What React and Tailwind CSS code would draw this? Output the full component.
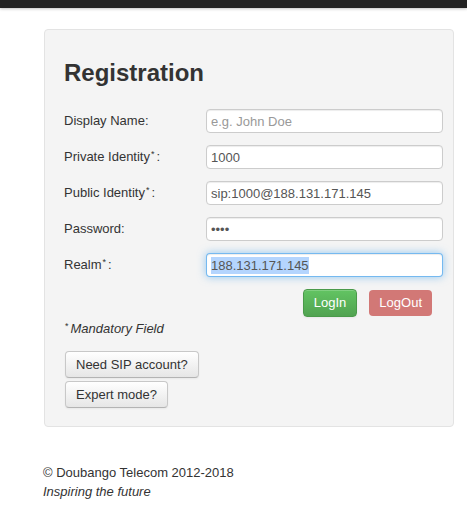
function Field({ label, star, children }) {
  return (
    <div className="flex items-center h-6">
      <label className="w-[142px] shrink-0 text-[13px] text-[#333]">
        {label}
        {star && <sup className="text-[9px] relative -top-[4px] ml-[1px]">*</sup>}
        {star ? <span className="ml-[2px]">:</span> : ":"}
      </label>
      {children}
    </div>
  );
}

const inputCls =
  "w-[237px] h-6 px-[4px] text-[13px] text-[#555] bg-white border border-[#ccc] rounded-[4px] shadow-[inset_0_1px_1px_rgba(0,0,0,0.075)] outline-none placeholder:text-[#999]";

const btnCls =
  "h-[27px] px-[10px] text-[13px] text-[#333] rounded-[4px] bg-gradient-to-b from-white to-[#e6e6e6] border border-[#c8c8c8] border-b-[#b3b3b3] shadow-[inset_0_1px_0_rgba(255,255,255,0.2),0_1px_2px_rgba(0,0,0,0.05)]";

export default function App() {
  return (
    <div
      className="min-h-[530px] bg-white text-[#333]"
      style={{ fontFamily: '"Liberation Sans", Arial, sans-serif' }}
    >
      {/* TOP BAR */}
      <div className="h-2 bg-[#222] shadow-[0_1px_3px_rgba(0,0,0,0.25)]" />

      {/* PANEL */}
      <div className="ml-[44px] mt-[21px] w-[410px] h-[398px] bg-[#f4f4f4] border border-[#e3e3e3] rounded-[4px] pl-[19px] pt-[23px]">
        <h2 className="text-[24px] font-bold leading-[40px] text-[#333]">Registration</h2>

        <div className="mt-[16px] flex flex-col gap-3">
          <Field label="Display Name">
            <input className={inputCls} placeholder="e.g. John Doe" readOnly />
          </Field>
          <Field label="Private Identity" star>
            <input className={inputCls} defaultValue="1000" readOnly />
          </Field>
          <Field label="Public Identity" star>
            <input className={inputCls} defaultValue="sip:1000@188.131.171.145" readOnly />
          </Field>
          <Field label="Password">
            <input className={inputCls} type="password" defaultValue="1000" readOnly />
          </Field>
          <Field label="Realm" star>
            <div className="w-[237px] h-6 px-[4px] flex items-center text-[13px] text-[#555] bg-white border border-[rgba(82,168,236,0.8)] rounded-[4px] shadow-[inset_0_1px_1px_rgba(0,0,0,0.075),0_0_8px_rgba(82,168,236,0.6)]">
              <span className="bg-[#b4d5fe] leading-[17px]">188.131.171.145</span>
            </div>
          </Field>
        </div>

        {/* ACTIONS */}
        <div className="mt-3 w-[368px] flex justify-end gap-3">
          <button className="h-7 px-[10px] text-[13px] text-white rounded-[4px] bg-gradient-to-b from-[#62c462] to-[#51a351] border border-[#4a9a4a] shadow-[inset_0_1px_0_rgba(255,255,255,0.2),0_1px_2px_rgba(0,0,0,0.05)]">
            LogIn
          </button>
          <button className="h-[26px] mt-[1px] px-[10px] text-[13px] text-white rounded-[4px] bg-[#d27876]">
            LogOut
          </button>
        </div>

        <p className="mt-[2px] ml-[1px] text-[13px] italic leading-5">
          <sup className="not-italic text-[9px] relative -top-[4px] mr-[2px]">*</sup>
          Mandatory Field
        </p>

        <div className="mt-[12px] ml-[1px] flex flex-col items-start gap-[3px]">
          <button className={btnCls}>Need SIP account?</button>
          <button className={btnCls}>Expert mode?</button>
        </div>
      </div>

      {/* FOOTER */}
      <footer className="mt-[36px] ml-[43px] text-[13px] leading-[19px] text-[#333]">
        <p>© Doubango Telecom 2012-2018</p>
        <p className="italic">Inspiring the future</p>
      </footer>
    </div>
  );
}
